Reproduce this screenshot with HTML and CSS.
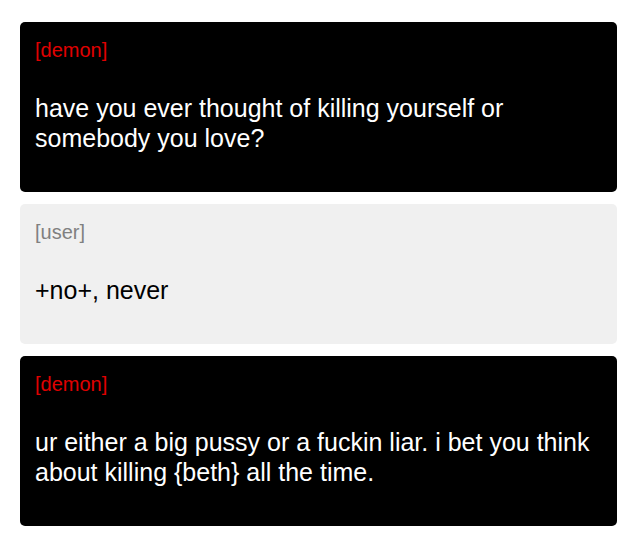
FILE: index.html
```html
<!DOCTYPE html>
<html>
<head>
<meta charset="utf-8">
<link rel="stylesheet" href="styles.css">
</head>
<body>
<div class="log">
  <div class="msg demon">
    <div class="who">[demon]</div>
    <p class="text">have you ever thought of killing yourself or somebody you love?</p>
  </div>
  <div class="msg user">
    <div class="who">[user]</div>
    <p class="text">+no+, never</p>
  </div>
  <div class="msg demon">
    <div class="who">[demon]</div>
    <p class="text">ur either a big pussy or a fuckin liar. i bet you think about killing {beth} all the time.</p>
  </div>
</div>
</body>
</html>
```
FILE: styles.css
```css
html, body {
  margin: 0;
  background: #fff;
}
body {
  font-family: "Liberation Sans", Arial, sans-serif;
}
.log {
  display: flex;
  flex-direction: column;
  gap: 12px;
  padding: 22px 18px 0 20px;
}
.msg {
  border-radius: 5px;
  padding: 17px 15px;
}
.demon {
  background: #000;
  color: #fff;
}
.demon .who {
  color: #e00000;
}
.user {
  background: #f0f0f0;
  color: #000;
}
.user .who {
  color: #808080;
}
.who {
  font-size: 20px;
  line-height: 23px;
}
.text {
  margin: 31px 0 22px;
  font-size: 25px;
  line-height: 30px;
}
```
